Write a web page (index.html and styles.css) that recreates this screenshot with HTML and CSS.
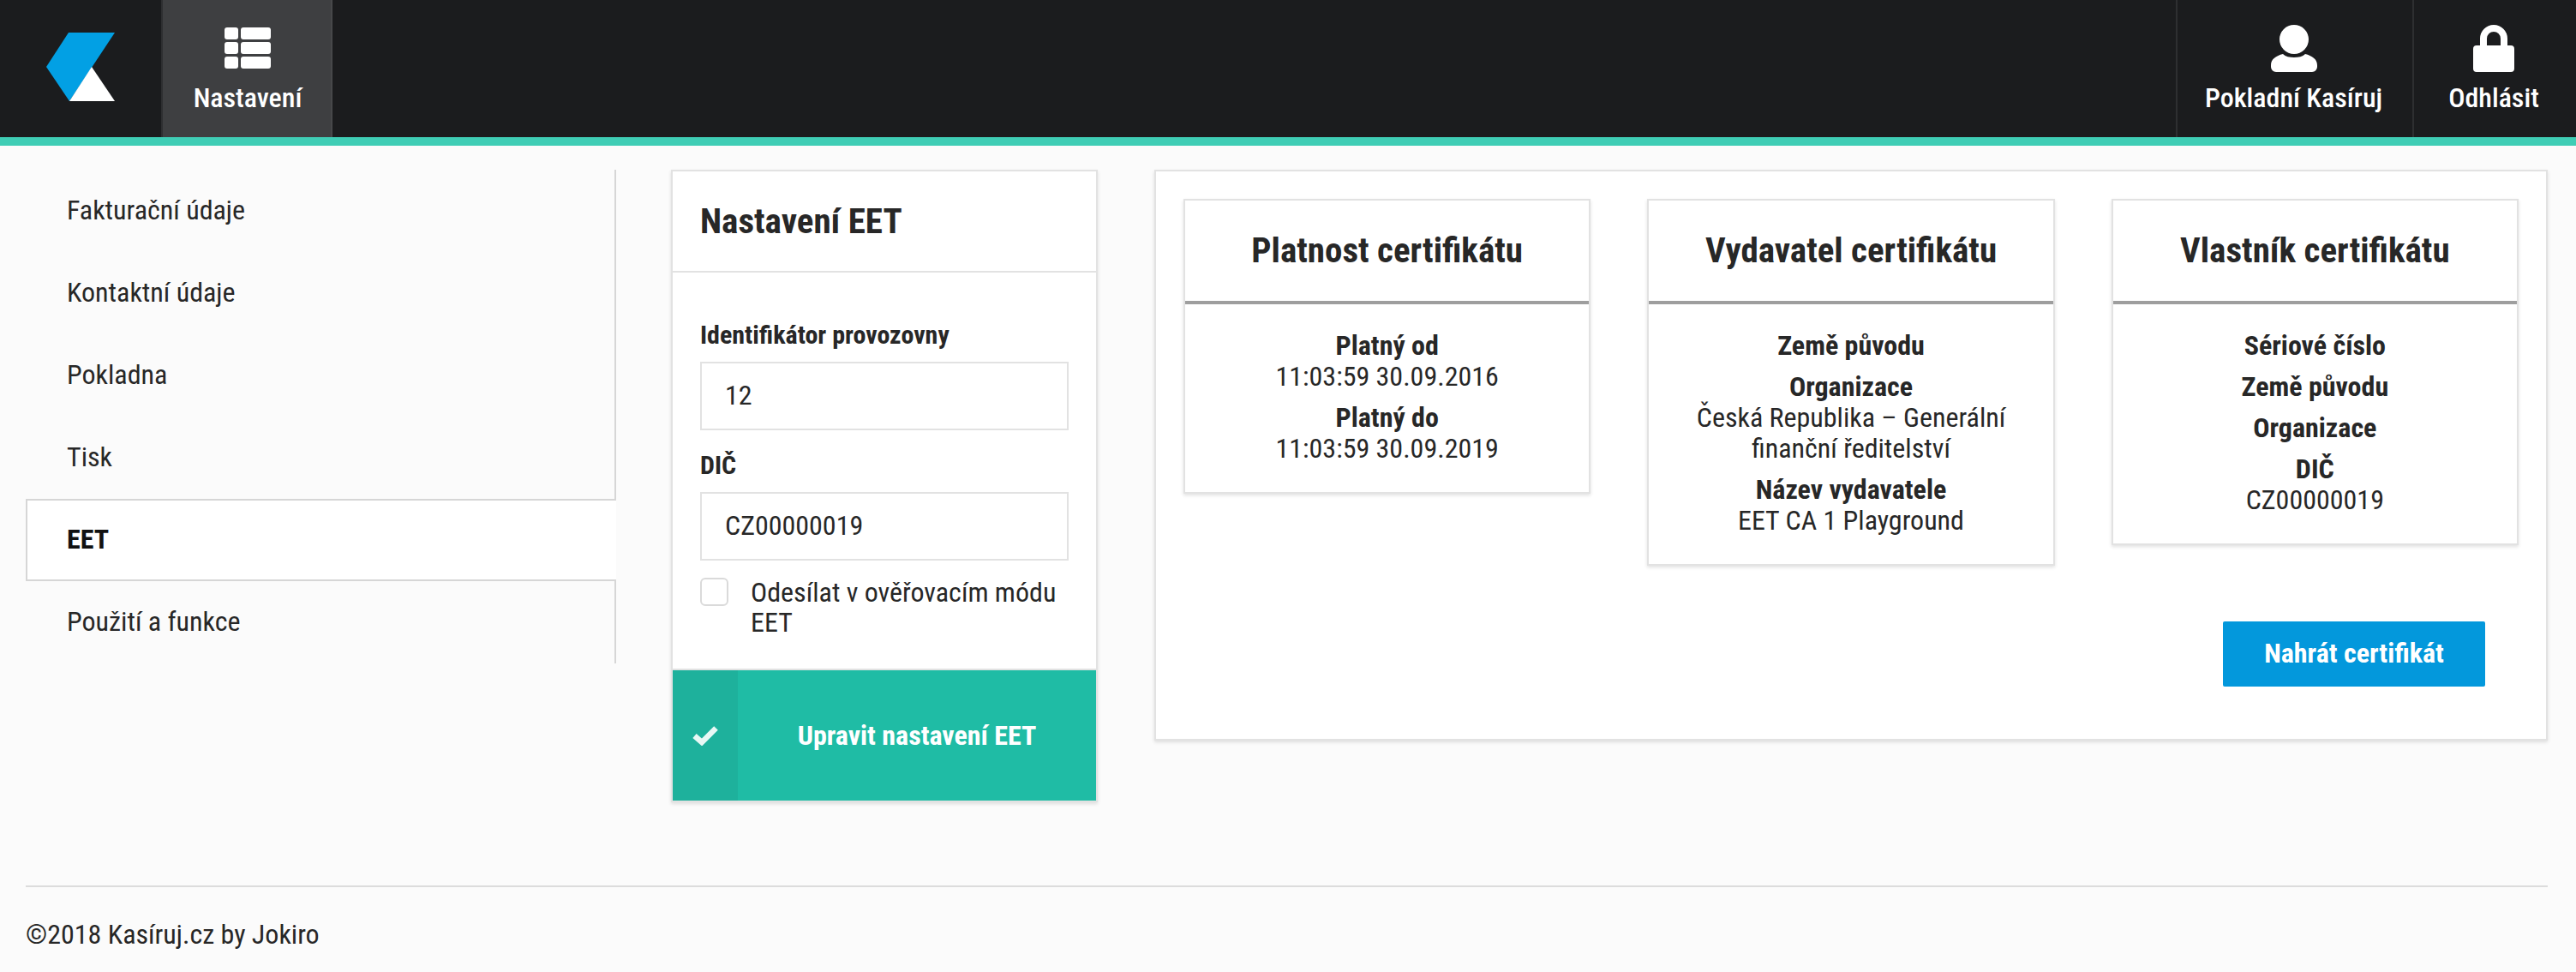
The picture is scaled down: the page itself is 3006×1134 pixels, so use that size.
FILE: index.html
```html
<!DOCTYPE html>
<html lang="cs">
<head>
    <meta charset="UTF-8">
    <title>Nastavení EET</title>
    <link rel="stylesheet" href="styles.css">
</head>
<body>

    <!-- horní lišta -->
    <header class="topbar">
        <a class="logo" href="#">
            <svg width="80" height="80" viewBox="0 0 80 80">
                <polygon points="26,0 80,0 27,80 0,40" fill="#02a0e4"/>
                <polygon points="53,40 80,80 27,80" fill="#ffffff"/>
            </svg>
        </a>
        <a class="nav-item nav-item-active nav-settings" href="#">
            <span class="nav-icon">
                <svg width="54" height="48" viewBox="0 0 54 48" fill="#ffffff">
                    <rect x="0" y="0" width="16" height="14" rx="3"/>
                    <rect x="19" y="0" width="35" height="14" rx="3"/>
                    <rect x="0" y="17" width="16" height="14" rx="3"/>
                    <rect x="19" y="17" width="35" height="14" rx="3"/>
                    <rect x="0" y="34" width="16" height="14" rx="3"/>
                    <rect x="19" y="34" width="35" height="14" rx="3"/>
                </svg>
            </span>
            <span class="nav-label">Nastavení</span>
        </a>
        <div class="topbar-right">
            <a class="nav-item nav-user" href="#">
                <span class="nav-icon">
                    <svg width="54" height="55" viewBox="0 0 54 55" fill="#ffffff">
                        <circle cx="27" cy="17" r="17"/>
                        <path d="M6 55a6 6 0 0 1-6-6v-2c0-7 6-11 14-13 3 3 8 4 13 4s10-1 13-4c8 2 14 6 14 13v2a6 6 0 0 1-6 6z"/>
                    </svg>
                </span>
                <span class="nav-label">Pokladní Kasíruj</span>
            </a>
            <a class="nav-item nav-logout" href="#">
                <span class="nav-icon">
                    <svg width="48" height="55" viewBox="0 0 48 55" fill="#ffffff">
                        <path fill-rule="evenodd" d="M8 24v-8a16 16 0 0 1 32 0v8h4a4 4 0 0 1 4 4v23a4 4 0 0 1-4 4H4a4 4 0 0 1-4-4V28a4 4 0 0 1 4-4zM16 24h16v-8a8 8 0 0 0-16 0z"/>
                    </svg>
                </span>
                <span class="nav-label">Odhlásit</span>
            </a>
        </div>
    </header>

    <main class="content">
        <!-- boční menu -->
        <ul class="side-menu">
            <li><a href="#">Fakturační údaje</a></li>
            <li><a href="#">Kontaktní údaje</a></li>
            <li><a href="#">Pokladna</a></li>
            <li><a href="#">Tisk</a></li>
            <li class="active"><a href="#">EET</a></li>
            <li><a href="#">Použití a funkce</a></li>
        </ul>

        <!-- formulář EET -->
        <form class="eet-form">
            <h2 class="eet-title">Nastavení EET</h2>
            <div class="eet-fields">
                <label class="field-label" for="provozovna">Identifikátor provozovny</label>
                <input class="field-input" type="text" id="provozovna" value="12">
                <label class="field-label" for="dic">DIČ</label>
                <input class="field-input" type="text" id="dic" value="CZ00000019">
                <label class="check-row">
                    <span class="check-box"></span>
                    <span>Odesílat v ověřovacím módu EET</span>
                </label>
            </div>
            <button class="submit-btn" type="button">
                <span class="submit-icon">
                    <svg width="32" height="24" viewBox="0 0 32 24">
                        <path d="M3.5 12.5L12 20 28.500 3.500" fill="none" stroke="#e8f8f5" stroke-width="6.500"/>
                    </svg>
                </span>
                <span class="submit-text">Upravit nastavení EET</span>
            </button>
        </form>

        <!-- certifikáty -->
        <section class="cert-panel">
            <div class="cert-grid">
                <div class="cert-card">
                    <h3 class="cert-title">Platnost certifikátu</h3>
                    <div class="cert-body">
                        <div class="cert-row"><b>Platný od</b><span>11:03:59 30.09.2016</span></div>
                        <div class="cert-row"><b>Platný do</b><span>11:03:59 30.09.2019</span></div>
                    </div>
                </div>
                <div class="cert-card">
                    <h3 class="cert-title">Vydavatel certifikátu</h3>
                    <div class="cert-body">
                        <div class="cert-row"><b>Země původu</b></div>
                        <div class="cert-row"><b>Organizace</b><span>Česká Republika – Generální finanční ředitelství</span></div>
                        <div class="cert-row"><b>Název vydavatele</b><span>EET CA 1 Playground</span></div>
                    </div>
                </div>
                <div class="cert-card">
                    <h3 class="cert-title">Vlastník certifikátu</h3>
                    <div class="cert-body">
                        <div class="cert-row"><b>Sériové číslo</b></div>
                        <div class="cert-row"><b>Země původu</b></div>
                        <div class="cert-row"><b>Organizace</b></div>
                        <div class="cert-row"><b>DIČ</b><span>CZ00000019</span></div>
                    </div>
                </div>
            </div>
            <div class="cert-actions">
                <button class="upload-btn" type="button">Nahrát certifikát</button>
            </div>
        </section>
    </main>

    <footer class="page-footer">©2018 Kasíruj.cz by Jokiro</footer>

</body>
</html>
```

FILE: styles.css
```css
* {
    box-sizing: border-box;
}

body {
    margin: 0;
    min-height: 100vh;
    display: flex;
    flex-direction: column;
    background-color: #fbfbfb;
    color: #272727;
    font-family: Roboto, "Liberation Sans", sans-serif;
    font-stretch: 75%;
    font-size: 32px;
    line-height: 36px;
}

a {
    color: inherit;
    text-decoration: none;
}

/* top bar */
.topbar {
    display: flex;
    height: 170px;
    background-color: #1b1c1e;
    border-bottom: 10px solid #3fcdb5;
}

.logo {
    width: 188px;
    padding: 38px 0 0 54px;
}

.logo svg {
    display: block;
}

.nav-item {
    display: flex;
    flex-direction: column;
    align-items: center;
    padding-top: 28px;
    color: #ffffff;
    border-left: 2px solid #2e2f31;
}

.nav-icon {
    display: flex;
    align-items: center;
    height: 56px;
}

.nav-label {
    margin-top: 12px;
    font-size: 32px;
    font-weight: 500;
    line-height: 36px;
}

.nav-settings {
    width: 200px;
    padding-left: 2px;
    background-color: #3e3f41;
    border-right: 2px solid #47484a;
}

.topbar-right {
    display: flex;
    margin-left: auto;
}

.nav-user {
    width: 276px;
    padding-right: 3px;
}

.nav-logout {
    width: 191px;
    padding-right: 3px;
}

/* main layout */
.content {
    display: flex;
    align-items: flex-start;
    padding: 28px 33px 0 30px;
}

.side-menu {
    width: 689px;
    margin: 0;
    padding: 0;
    list-style: none;
}

.side-menu li {
    height: 96px;
    border-right: 2px solid #d6d6d6;
}

.side-menu a {
    display: block;
    padding: 29px 0 0 48px;
}

.side-menu .active {
    background-color: #ffffff;
    border: 2px solid #d6d6d6;
    border-right: none;
}

.side-menu .active a {
    padding: 27px 0 0 46px;
    color: #111111;
    font-weight: 700;
}

/* EET form */
.eet-form {
    width: 498px;
    margin-left: 64px;
    background-color: #ffffff;
    border: 2px solid #e2e2e2;
    box-shadow: 0 2px 4px rgba(0, 0, 0, 0.12);
}

.eet-title {
    height: 118px;
    margin: 0;
    padding: 38px 32px 0;
    border-bottom: 2px solid #e2e2e2;
    font-size: 41px;
    font-weight: 700;
    line-height: 40px;
}

.eet-fields {
    padding: 55px 32px 0;
    border-bottom: 2px solid #e2e2e2;
}

.field-label {
    display: block;
    font-size: 30px;
    font-weight: 700;
    line-height: 35px;
}

.field-input {
    display: block;
    width: 100%;
    height: 80px;
    margin: 14px 0 23px;
    padding: 0 27px 2px;
    color: #272727;
    background-color: #ffffff;
    border: 2px solid #e2e2e2;
    font: inherit;
    font-stretch: 75%;
}

.check-row {
    display: flex;
    gap: 26px;
    height: 106px;
    margin-top: -3px;
    line-height: 35px;
}

.check-box {
    flex: none;
    width: 33px;
    height: 33px;
    border: 2px solid #dadada;
    border-radius: 6px;
}

.submit-btn {
    display: flex;
    align-items: stretch;
    width: 100%;
    height: 152px;
    padding: 0;
    color: #ffffff;
    background-color: #1fbca5;
    border: none;
    font: inherit;
    font-stretch: 75%;
    font-weight: 700;
}

.submit-icon {
    display: flex;
    align-items: center;
    justify-content: center;
    width: 76px;
    background-color: #1eb19c;
}

.submit-text {
    flex: 1;
    align-self: center;
    text-align: center;
}

/* certificates */
.cert-panel {
    flex: 1;
    height: 666px;
    margin-left: 66px;
    padding: 32px 32px 0;
    background-color: #ffffff;
    border: 2px solid #e2e2e2;
    box-shadow: 0 2px 4px rgba(0, 0, 0, 0.12);
}

.cert-grid {
    display: grid;
    grid-template-columns: repeat(3, 1fr);
    gap: 66px;
    align-items: start;
}

.cert-card {
    border: 2px solid #e2e2e2;
    box-shadow: 0 2px 4px rgba(0, 0, 0, 0.12);
    text-align: center;
}

.cert-title {
    height: 121px;
    margin: 0;
    padding-top: 38px;
    border-bottom: 4px solid #9e9e9e;
    font-size: 41px;
    font-weight: 700;
    line-height: 40px;
}

.cert-body {
    padding: 30px 24px 33px;
}

.cert-row {
    margin-bottom: 12px;
}

.cert-row:last-child {
    margin-bottom: 0;
}

.cert-row b,
.cert-row span {
    display: block;
}

.cert-actions {
    display: flex;
    justify-content: flex-end;
    padding: 0 39px 0 0;
    margin-top: 65px;
}

.upload-btn {
    width: 306px;
    height: 76px;
    padding: 0 0 2px;
    color: #ffffff;
    background-color: #0398dc;
    border: none;
    border-radius: 2px;
    font: inherit;
    font-stretch: 75%;
    font-weight: 700;
}

/* footer */
.page-footer {
    margin: auto 33px 0 30px;
    height: 101px;
    padding-top: 37px;
    border-top: 2px solid #dcdcdc;
}
```
